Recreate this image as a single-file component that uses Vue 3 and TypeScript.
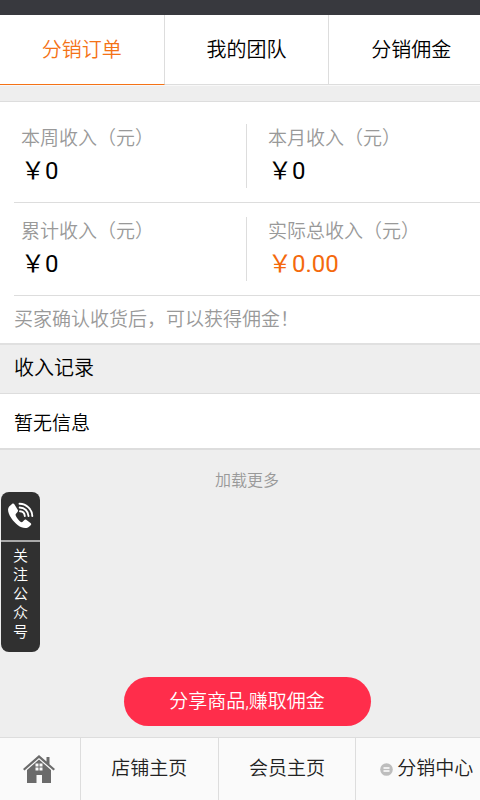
<script setup lang="ts">
import { ref } from 'vue'

interface Income {
  label: string
  amount: string
  highlight?: boolean
}

const tabs: string[] = ['分销订单', '我的团队', '分销佣金']
const activeTab = ref(0)

const incomes: Income[] = [
  { label: '本周收入（元）', amount: '￥0' },
  { label: '本月收入（元）', amount: '￥0' },
  { label: '累计收入（元）', amount: '￥0' },
  { label: '实际总收入（元）', amount: '￥0.00', highlight: true },
]
</script>

<template>
  <div class="viewport">
    <div class="page">
      <div class="status-bar"></div>
      <nav class="tabs">
        <button
          v-for="(tab, i) in tabs"
          :key="tab"
          type="button"
          class="tab"
          :class="{ active: activeTab === i }"
          @click="activeTab = i"
        >{{ tab }}</button>
      </nav>

      <main class="content">
        <section class="summary">
          <dl class="grid">
            <div v-for="item in incomes" :key="item.label" class="cell">
              <div class="cell-body">
                <dt>{{ item.label }}</dt>
                <dd :class="{ highlight: item.highlight }">{{ item.amount }}</dd>
              </div>
            </div>
          </dl>
          <p class="note">买家确认收货后，可以获得佣金！</p>
        </section>
        <h2 class="heading">收入记录</h2>
        <p class="empty">暂无信息</p>
        <button type="button" class="more">加载更多</button>
        <button type="button" class="share">分享商品,赚取佣金</button>
      </main>

      <footer class="bottom">
        <a href="#home" class="home" aria-label="首页">
          <svg width="34" height="30" viewBox="0 0 34 30">
            <path fill="#6b6b6b" d="M17 1 1 15l1.500 1.500L17 4l14.500 12.500L33 15l-5.500-4.800V3h-3v4.500z" />
            <path fill="#6b6b6b" fill-rule="evenodd" d="M17 5.500 5 16v13h9.500v-8h5.500v8h9V16zM13.500 9.500h3v3h-3zm4 0h3v3h-3zM13.500 13.500h3v3h-3zm4 0h3v3h-3z" />
          </svg>
        </a>
        <a href="#shop">店铺主页</a>
        <a href="#member">会员主页</a>
        <a href="#center" class="center">
          <svg width="13" height="13" viewBox="0 0 13 13">
            <circle cx="6.500" cy="6.500" r="6.300" fill="#bdbdbd" />
            <path d="M3.500 5h6M3.500 8h6" stroke="#fff" stroke-width="1.300" />
          </svg>
          <span>分销中心</span>
        </a>
      </footer>

      <a href="#follow" class="follow">
        <span class="phone">
          <svg width="27" height="28" viewBox="0 0 27 28">
            <path fill="#fff" d="M5 2 2.200 4.400C.2 6.500.8 11 4.200 16c4 6 9.300 10 14 10 2 0 3.600-.8 5.500-2.800.8-.8.6-1.600-.2-2.200l-4-3c-.8-.6-1.700-.5-2.400.2l-1.500 1.600c-1 .9-2.600-.1-4.600-2.600-2.300-2.800-3-4.600-2-5.500L10.500 10c.6-.6.7-1.400.2-2.200L7.500 2.500C6.800 1.500 6 1.300 5 2z" />
            <g fill="none" stroke="#fff" stroke-linecap="round" stroke-width="1.900">
              <path d="M13 9.200c2.700.1 4.600 2 4.800 4.800" />
              <path d="M12.700 5.500c4.900.1 8.500 3.700 8.800 8.500" />
              <path d="M12.500 1.800C19.500 1.900 25 7.200 25.300 14" />
            </g>
          </svg>
        </span>
        <span class="follow-text">关注公众号</span>
      </a>
    </div>
  </div>
</template>

<style>
body {
  margin: 0;
  background: #eee;
}
</style>

<style scoped>
.viewport {
  overflow: hidden;
  font-family: Roboto, "Noto Sans CJK SC", sans-serif;
  font-weight: 350;
  color: #000;
}

/* The sheet runs slightly past the right edge of the screen. */
.page {
  position: relative;
  display: flex;
  flex-direction: column;
  box-sizing: border-box;
  min-height: 100vh;
  margin-right: -14px;
  background: #eee;
}

button {
  font: inherit;
  color: inherit;
  border: 0;
  padding: 0;
  background: none;
  cursor: pointer;
}

a {
  color: inherit;
  text-decoration: none;
}

.status-bar {
  height: 15px;
  background: #38393e;
}

.tabs {
  display: grid;
  grid-template-columns: repeat(3, 1fr);
  background: #fff;
  border-bottom: 1px solid #f8f8f8;
}

.tab {
  height: 70px;
  padding-bottom: 2px;
  font-size: 20px;
  border-right: 1px solid #ddd;
  border-bottom: 1px solid #ddd;
}

.tab.active {
  color: #f47216;
  border-bottom-color: #f47216;
}

.content {
  flex: 1;
  display: flex;
  flex-direction: column;
  padding: 15px 0 11px;
}

.summary {
  padding: 8px 0 0 14px;
  background: #fff;
  border-top: 1px solid #ddd;
  border-bottom: 2px solid #e0e0e0;
}

.grid {
  display: grid;
  grid-template-columns: 1fr 1fr;
  margin: 0;
  padding-right: 14px;
}

.cell {
  padding: 14px 0;
  border-bottom: 1px solid #ddd;
}

.cell-body {
  height: 64px;
  padding-left: 7px;
}

.cell:nth-child(odd) .cell-body {
  border-right: 1px solid #ddd;
}

.cell:nth-child(even) .cell-body {
  padding-left: 21px;
}

dt {
  font-size: 19px;
  line-height: 30px;
  color: #999;
}

dd {
  margin: 0;
  font-size: 24px;
  font-weight: 400;
  line-height: 34px;
}

.highlight {
  color: #f4690c;
}

.note {
  margin: 0;
  font-size: 19px;
  line-height: 47px;
  color: #999;
}

.heading {
  margin: 0;
  padding: 0 0 2px 14px;
  font-size: 20px;
  font-weight: inherit;
  line-height: 46px;
  border-bottom: 1px solid #ddd;
}

.empty {
  margin: 0;
  padding: 6px 0 0 14px;
  font-size: 19px;
  line-height: 48px;
  background: #fff;
  border-bottom: 2px solid #ddd;
}

.more {
  align-self: center;
  font-size: 16px;
  line-height: 62px;
  color: #999;
}

.share {
  align-self: center;
  width: 50%;
  height: 49px;
  margin-top: auto;
  padding-bottom: 4px;
  font-size: 19px;
  color: #fff;
  background: #ff2d4b;
  border-radius: 25px;
}

.bottom {
  display: grid;
  grid-template-columns: 81px repeat(3, 1fr);
  height: 62px;
  font-size: 19px;
  color: #222;
  background: #fafafa;
  border-top: 1px solid #ddd;
}

.bottom a {
  display: flex;
  align-items: center;
  justify-content: center;
  padding-bottom: 6px;
  border-right: 1px solid #ddd;
}

.bottom .home {
  padding: 0 2px 0 0;
}

.bottom .center {
  gap: 4px;
  padding-left: 4px;
}

.center svg {
  margin-top: 6px;
}

.follow {
  position: absolute;
  top: 492px;
  left: 1px;
  width: 39px;
  height: 160px;
  border-radius: 8px;
  color: #fff;
  background: #303030;
}

.phone {
  display: flex;
  align-items: center;
  justify-content: center;
  height: 48px;
  border-bottom: 2px solid #aaa;
}

.follow-text {
  display: block;
  width: 15px;
  margin: 5px auto 0;
  font-size: 15px;
  line-height: 19px;
  word-break: break-all;
}
</style>
